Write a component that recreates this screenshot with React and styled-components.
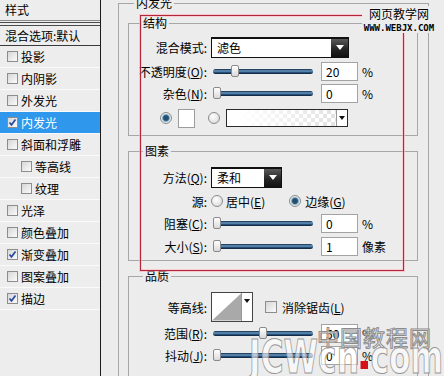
import React from 'react';
import styled, { createGlobalStyle } from 'styled-components';

const GlobalStyle = createGlobalStyle`
  *, *::before, *::after { box-sizing: border-box; }
  html, body { margin: 0; padding: 0; background: #ececec; overflow: hidden; }
  body {
    font-family: "Noto Sans CJK SC", "DejaVu Sans", sans-serif;
    font-size: 12px;
    color: #000;
  }
`;

const styleItems = [
  { name: '投影' },
  { name: '内阴影' },
  { name: '外发光' },
  { name: '内发光', checked: true, active: true },
  { name: '斜面和浮雕' },
  { name: '等高线', indent: true },
  { name: '纹理', indent: true },
  { name: '光泽' },
  { name: '颜色叠加' },
  { name: '渐变叠加', checked: true },
  { name: '图案叠加' },
  { name: '描边', checked: true },
];

const Screen = styled.div`
  position: relative;
  display: flex;
  width: 444px;
  height: 376px;
  overflow: hidden;
  background: #ececec;
`;

/* left list */
const StyleList = styled.div`
  flex: none;
  width: 101px;
  border-right: 1px solid #1c1c1c;
  display: flex;
  flex-direction: column;
  background: #ededed;
`;

const ListHeader = styled.div`
  height: 21px;
  line-height: 20px;
  padding-left: 5px;
  border-bottom: 1px solid #8c8c8c;
`;

const DoubleRule = styled.div`
  height: 4px;
  margin-top: 1px;
  border-top: 1px solid #4a4a4a;
  border-bottom: 1px solid #4a4a4a;
`;

const BlendRow = styled.div`
  height: 20px;
  line-height: 19px;
  padding-left: 5px;
  border-bottom: 1px solid #3a3a3a;
  white-space: nowrap;
`;

const StyleItem = styled.div`
  height: 22px;
  display: flex;
  align-items: center;
  padding-left: ${p => (p.$indent ? 21 : 7)}px;
  border-bottom: 1px solid #fafafa;
  background: ${p => (p.$active ? '#2f97ec' : 'transparent')};
  color: ${p => (p.$active ? '#fff' : '#000')};
  white-space: nowrap;
`;

const CheckBox = styled.span`
  flex: none;
  width: 11px;
  height: 11px;
  margin-right: 3px;
  border: 1px solid #8d8d8d;
  background: linear-gradient(135deg, #d6d6d6, #fbfbfb);
  display: flex;
  align-items: center;
  justify-content: center;
`;

const Tick = () => (
  <svg width="9" height="9" viewBox="0 0 9 9">
    <path d="M1.5 4.5 L3.5 6.8 L7.5 1.5" fill="none" stroke="#274a9c" strokeWidth="1.7" />
  </svg>
);

/* right side */
const Pane = styled.div`
  flex: 1;
  padding-left: 17px;
`;

const Group = styled.fieldset`
  margin: ${p => p.$mt || 0}px 0 0 0;
  padding: ${p => p.$pad || '0'};
  border: 1px solid #a7a7a7;
  border-bottom: ${p => (p.$open ? 'none' : '1px solid #a7a7a7')};
  min-width: 0;
  width: ${p => (p.$w ? `${p.$w}px` : 'auto')};
  height: ${p => (p.$h ? `${p.$h}px` : 'auto')};
`;

const Title = styled.legend`
  padding: 0 2px;
  margin-left: ${p => p.$ml}px;
  height: 14px;
  line-height: 14px;
  background: #ececec;
`;

const Row = styled.div`
  display: flex;
  align-items: center;
  height: ${p => p.$h || 22}px;
  margin-top: ${p => p.$mt || 0}px;
  white-space: nowrap;
`;

const Label = styled.span`
  flex: none;
  width: 78px;
  margin-right: 4px;
  text-align: right;
`;

const U = styled.span`
  text-decoration: underline;
  text-underline-offset: 1px;
`;

const Select = styled.div`
  flex: none;
  display: flex;
  width: ${p => p.$w}px;
  height: 21px;
  border: 1px solid #111;
  border-top-width: 2px;
  background: #fff;
`;

const SelectText = styled.span`
  flex: 1;
  padding-left: 5px;
  line-height: 18px;
`;

const SelectButton = styled.span`
  flex: none;
  width: 17px;
  background: linear-gradient(#5a5a5a, #262626 55%, #111);
  display: flex;
  align-items: center;
  justify-content: center;
  &::after {
    content: '';
    border-left: 4px solid transparent;
    border-right: 4px solid transparent;
    border-top: 5px solid #fff;
  }
`;

const Slider = styled.div`
  flex: none;
  position: relative;
  width: 100px;
  height: 13px;
  margin-left: 2px;
`;

const Track = styled.div`
  position: absolute;
  left: 0;
  right: 0;
  top: 4px;
  height: 5px;
  border-radius: 3px;
  background: linear-gradient(#0c2746, #6d9cc4 40%, #2a5580 65%, #0a1d36);
`;

const Thumb = styled.div`
  position: absolute;
  top: 0;
  width: 8px;
  height: 12px;
  border: 1px solid #8a8a8a;
  border-radius: 2px;
  background: linear-gradient(#ffffff, #d9d9d9);
`;

const Field = styled.div`
  flex: none;
  width: 37px;
  height: 19px;
  margin-left: 8px;
  padding-left: 4px;
  line-height: 17px;
  border: 1px solid #a3a3a3;
  background: #fff;
`;

const Unit = styled.span`
  margin-left: 4px;
`;

const Radio = styled.span`
  flex: none;
  width: 12px;
  height: 12px;
  margin-left: ${p => p.$ml || 0}px;
  border-radius: 50%;
  border: 1px solid #8b8b8b;
  background: ${p =>
    p.$on
      ? 'radial-gradient(circle, #244f70 0 2.4px, #7ea7c2 3.4px, #e4ecf1 4.5px)'
      : 'radial-gradient(circle at 40% 35%, #ffffff, #d4d4d4)'};
`;

const Swatch = styled.span`
  flex: none;
  width: 17px;
  height: 19px;
  margin-left: 6px;
  border: 1px solid #9c9c9c;
  background: #fff;
`;

const GradientBox = styled.span`
  flex: none;
  display: flex;
  width: 122px;
  height: 18px;
  margin-left: 6px;
  border: 1px solid #2a2a2a;
  background: #fff;
`;

const GradientFill = styled.span`
  flex: 1;
  background:
    linear-gradient(to right, #fff 10%, rgba(255, 255, 255, 0) 100%),
    conic-gradient(#e2e2e2 90deg, #fff 90deg 180deg, #e2e2e2 180deg 270deg, #fff 270deg) 0 0 / 8px 8px;
`;

const MiniArrow = styled.span`
  flex: none;
  width: 11px;
  border-left: 1px solid #9a9a9a;
  display: flex;
  align-items: ${p => (p.$top ? 'flex-start' : 'center')};
  padding-top: ${p => (p.$top ? 6 : 0)}px;
  justify-content: center;
  background: #fff;
  &::after {
    content: '';
    border-left: 3px solid transparent;
    border-right: 3px solid transparent;
    border-top: 4px solid #111;
  }
`;

const Option = styled.span`
  margin-left: ${p => p.$ml || 3}px;
`;

const ContourBox = styled.div`
  flex: none;
  display: flex;
  width: 42px;
  height: 30px;
  border: 1px solid #444;
  background: #fff;
`;

const SmallCheck = styled(CheckBox)`
  width: 12px;
  height: 12px;
  margin-left: 12px;
  margin-right: 5px;
`;

/* overlays */
const RedFrame = styled.div`
  position: absolute;
  left: 140px;
  top: 15px;
  width: 264px;
  height: 256px;
  border: 1px solid #b3263a;
  box-shadow: 0 0 0 1px rgba(255, 170, 180, 0.55), inset 0 0 0 1px rgba(255, 175, 185, 0.5);
  pointer-events: none;
`;

const SiteMark = styled.div`
  position: absolute;
  left: 362px;
  top: 6px;
  width: 74px;
  height: 27px;
  background: #ececec;
  display: flex;
  flex-direction: column;
  align-items: center;
  pointer-events: none;
`;

const SiteName = styled.div`
  font-size: 12px;
  line-height: 16px;
  text-shadow: 0 0 2px #fff;
`;

const SiteUrl = styled.div`
  font-family: "DejaVu Sans Mono", monospace;
  font-size: 9px;
  font-weight: bold;
  line-height: 9px;
  margin-top: 2px;
`;

const CnMark = styled.div`
  position: absolute;
  left: 317px;
  top: 325px;
  font-size: 22px;
  line-height: 1;
  letter-spacing: 1px;
  color: rgba(255, 255, 255, 0.7);
  -webkit-text-stroke: 1px #8c8c8c;
  white-space: nowrap;
  pointer-events: none;
`;

const BigMark = styled.div`
  position: absolute;
  left: 249px;
  top: 334px;
  font-family: "DejaVu Sans", sans-serif;
  font-weight: bold;
  font-size: 46px;
  line-height: 1;
  white-space: nowrap;
  transform: scaleX(0.68);
  transform-origin: left top;
  color: rgba(255, 255, 255, 0.6);
  -webkit-text-stroke: 1px #979797;
  pointer-events: none;
`;

const RedDot = styled.span`
  display: inline-block;
  width: 11px;
  height: 8px;
  margin: 0 4px 0 2px;
  background: #d4121b;
  vertical-align: 4px;
`;

const SliderRow = ({ label, value, text, unit = '%' }) => (
  <Row>
    <Label>{label}</Label>
    <Slider>
      <Track />
      <Thumb style={{ left: `${(value / 100) * 92}px` }} />
    </Slider>
    <Field>{text}</Field>
    <Unit>{unit}</Unit>
  </Row>
);

const App = () => (
  <Screen>
    <GlobalStyle />
    <StyleList>
      <ListHeader>样式</ListHeader>
      <DoubleRule />
      <BlendRow>混合选项:默认</BlendRow>
      {styleItems.map(item => (
        <StyleItem key={item.name} $indent={item.indent} $active={item.active}>
          <CheckBox>{item.checked && <Tick />}</CheckBox>
          {item.name}
        </StyleItem>
      ))}
    </StyleList>

    <Pane>
      <Group $mt={-4} $w={311} $h={400} $open $pad="6px 10px 0 9px">
        <Title $ml={6}>内发光</Title>

        <Group $pad="6px 0 6px 0">
          <Title $ml={12}>结构</Title>
          <Row>
            <Label>混合模式:</Label>
            <Select $w={138}>
              <SelectText>滤色</SelectText>
              <SelectButton />
            </Select>
          </Row>
          <Row $mt={2}>
            <Label>不透明度(<U>O</U>):</Label>
            <Slider>
              <Track />
              <Thumb style={{ left: '18px' }} />
            </Slider>
            <Field>20</Field>
            <Unit>%</Unit>
          </Row>
          <SliderRow label={<>杂色(<U>N</U>):</>} value={0} text="0" />
          <Row $mt={3}>
            <Radio $on $ml={31} />
            <Swatch />
            <Radio $ml={13} />
            <GradientBox>
              <GradientFill />
              <MiniArrow />
            </GradientBox>
          </Row>
        </Group>

        <Group $mt={8} $pad="8px 0 3px 0">
          <Title $ml={14}>图素</Title>
          <Row>
            <Label>方法(<U>Q</U>):</Label>
            <Select $w={71}>
              <SelectText>柔和</SelectText>
              <SelectButton />
            </Select>
          </Row>
          <Row $mt={2}>
            <Label>源:</Label>
            <Radio />
            <Option>居中(<U>E</U>)</Option>
            <Radio $ml={24} $on />
            <Option $ml={4}>边缘(<U>G</U>)</Option>
          </Row>
          <SliderRow label={<>阻塞(<U>C</U>):</>} value={0} text="0" />
          <Row $mt={1}>
            <Label>大小(<U>S</U>):</Label>
            <Slider>
              <Track />
              <Thumb style={{ left: '0px' }} />
            </Slider>
            <Field>1</Field>
            <Unit>像素</Unit>
          </Row>
        </Group>

        <Group $mt={8} $open $h={120} $pad="9px 0 0 0">
          <Title $ml={14}>品质</Title>
          <Row $h={30}>
            <Label>等高线:</Label>
            <ContourBox>
              <svg width="30" height="28" viewBox="0 0 30 28">
                <rect width="30" height="28" fill="#fff" />
                <polygon points="0,28 30,0 30,28" fill="#a9a9a9" />
              </svg>
              <MiniArrow $top />
            </ContourBox>
            <SmallCheck />
            <span>消除锯齿(<U>L</U>)</span>
          </Row>
          <SliderRow label={<>范围(<U>R</U>):</>} value={50} text="50" />
          <SliderRow label={<>抖动(<U>J</U>):</>} value={0} text="0" />
        </Group>
      </Group>
    </Pane>

    <RedFrame />
    <SiteMark>
      <SiteName>网页教学网</SiteName>
      <SiteUrl>WWW.WEBJX.COM</SiteUrl>
    </SiteMark>
    <CnMark>中国教程网</CnMark>
    <BigMark>
      JCWcn<RedDot />com
    </BigMark>
  </Screen>
);

export default App;
